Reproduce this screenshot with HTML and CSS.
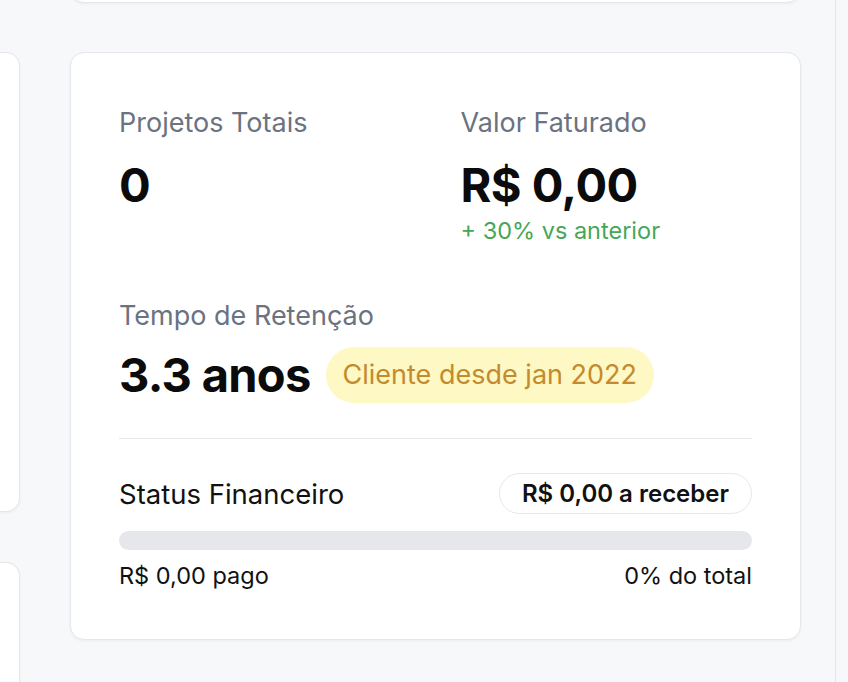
FILE: index.html
```html
<!DOCTYPE html>
<html lang="pt-BR">
<head>
<meta charset="utf-8">
<link rel="stylesheet" href="styles.css">
</head>
<body>
<div class="page">
  <div class="col-left">
    <div class="card side-card-1"></div>
    <div class="card side-card-2"></div>
  </div>
  <div class="col-main">
    <div class="card top-card"></div>
    <div class="card stats">
      <div class="grid">
        <div class="stat">
          <div class="label">Projetos Totais</div>
          <div class="value">0</div>
        </div>
        <div class="stat">
          <div class="label">Valor Faturado</div>
          <div class="value">R$ 0,00</div>
          <div class="trend">+ 30% vs anterior</div>
        </div>
      </div>
      <div class="retention">
        <div class="label">Tempo de Retenção</div>
        <div class="ret-row">
          <span class="value">3.3 anos</span>
          <span class="badge">Cliente desde jan 2022</span>
        </div>
      </div>
      <div class="divider"></div>
      <div class="fin-head">
        <span class="fin-title">Status Financeiro</span>
        <span class="pill">R$ 0,00 a receber</span>
      </div>
      <div class="bar"><div class="bar-fill" style="width:0%"></div></div>
      <div class="fin-foot">
        <span>R$ 0,00 pago</span>
        <span>0% do total</span>
      </div>
    </div>
  </div>
  <div class="col-right"></div>
</div>
</body>
</html>
```
FILE: styles.css
```css
* { box-sizing: border-box; }
html, body { margin: 0; padding: 0; }
body {
  background: #f7f8fa;
  font-family: Inter, "Noto Sans", sans-serif;
  color: #0b0b0c;
  overflow: hidden;
  height: 682px;
}
.page {
  display: flex;
  gap: 50px;
  height: 682px;
  overflow: hidden;
}
.card {
  background: #fff;
  border: 1px solid #e5e7eb;
  border-radius: 14px;
  box-shadow: 0 1px 3px rgba(0, 0, 0, 0.05);
  flex: none;
}
.col-left {
  width: 300px;
  margin-left: -280px;
  flex: none;
  display: flex;
  flex-direction: column;
  gap: 50px;
  padding-top: 52px;
}
.side-card-1 { height: 460px; }
.side-card-2 { height: 120px; border-bottom: none; border-bottom-left-radius: 0; border-bottom-right-radius: 0; }
.col-main {
  width: 731px;
  flex: none;
  display: flex;
  flex-direction: column;
  gap: 49px;
}
.top-card {
  height: 120px;
  margin-top: -117px;
}
.col-right {
  flex: 1;
  margin-left: -16px;
  border-left: 1px solid #e3e5e9;
  background: #f7f8fa;
}
.stats {
  padding: 48px 48px 49px;
}
.grid {
  display: grid;
  grid-template-columns: 1fr 1fr;
  column-gap: 50px;
}
.label {
  font-size: 27px;
  line-height: 32px;
  color: #6b7280;
  margin-top: 6px;
}
.value {
  font-size: 47px;
  font-weight: 700;
  line-height: 56px;
  letter-spacing: -0.5px;
  color: #0b0b0c;
  margin-top: 18px;
}
.trend {
  font-size: 23.5px;
  line-height: 28px;
  color: #46a758;
  margin-top: 4px;
}
.retention { margin-top: 55px; }
.ret-row {
  display: flex;
  align-items: center;
  gap: 15px;
  margin-top: 15px;
}
.ret-row .value { margin-top: 0; letter-spacing: -0.7px; }
.badge {
  background: #fef8c4;
  color: #c58a2c;
  font-size: 27px;
  line-height: 32px;
  padding: 12px 17px;
  border-radius: 999px;
}
.divider {
  height: 1px;
  background: #e5e7eb;
  margin-top: 35px;
}
.fin-head {
  display: flex;
  justify-content: space-between;
  align-items: center;
  margin-top: 34px;
}
.fin-title {
  font-size: 27.5px;
  line-height: 32px;
  color: #111;
}
.pill {
  border: 1.5px solid #e5e7eb;
  border-radius: 999px;
  padding: 6px 22px;
  font-size: 24px;
  line-height: 27px;
  font-weight: 600;
  color: #111;
}
.bar {
  height: 19px;
  background: #e5e7eb;
  border-radius: 999px;
  margin-top: 17px;
  overflow: hidden;
}
.bar-fill { height: 100%; background: #22c55e; }
.fin-foot {
  display: flex;
  justify-content: space-between;
  font-size: 23.5px;
  line-height: 28px;
  color: #111;
  margin-top: 12px;
}
```
